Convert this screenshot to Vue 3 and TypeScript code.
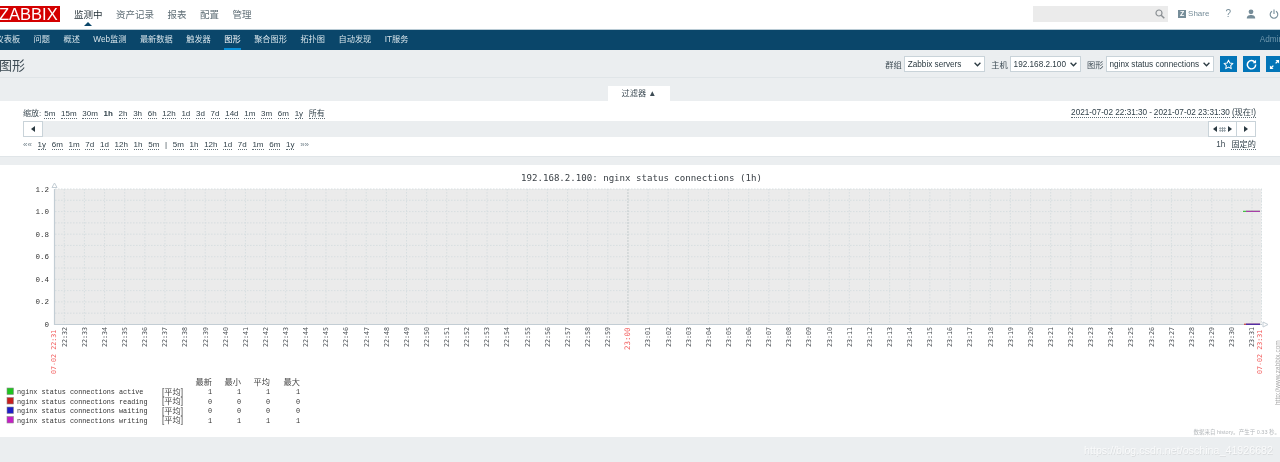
<template>
  <div class="page">
    <header class="top">
      <div class="logo">ZABBIX</div>
      <nav class="main-nav">
        <a v-for="m in mainMenu" :key="m" :class="{ active: m === '监测中' }">{{ m }}</a>
      </nav>
      <div class="top-right">
        <div class="search">
          <svg width="10" height="10" viewBox="0 0 10 10"><circle cx="4" cy="4" r="3" fill="none" stroke="#8a8f93" stroke-width="1.2" /><path d="M6.2 6.2 9.3 9.3" stroke="#8a8f93" stroke-width="1.5" /></svg>
        </div>
        <span class="share"><i class="z">Z</i>Share</span>
        <span class="help">?</span>
        <svg class="user" width="10" height="10" viewBox="0 0 10 10"><circle cx="5" cy="2.8" r="2.4" fill="#768d99" /><path d="M0.8 9.5C.8 6.6 3 6 5 6s4.200.6 4.200 3.500z" fill="#768d99" /></svg>
        <svg class="power" width="10" height="10" viewBox="0 0 10 10"><path d="M3 2.200a3.800 3.800 0 1 0 4 0M5 .5v4.500" fill="none" stroke="#768d99" stroke-width="1.100" /></svg>
      </div>
    </header>

    <nav class="sub-nav">
      <a v-for="s in subMenu" :key="s" :class="{ active: s === '图形' }">{{ s }}</a>
      <span class="admin">Admin</span>
    </nav>

    <div class="title-bar">
      <h1>图形</h1>
      <form class="controls">
        <label>群组</label>
        <div class="select w-group">Zabbix servers<svg width="7" height="5" viewBox="0 0 7 5"><path d="M.6.8 3.500 3.800 6.400.8" fill="none" stroke="#2b3a42" stroke-width="1.300" /></svg></div>
        <label>主机</label>
        <div class="select w-host">192.168.2.100<svg width="7" height="5" viewBox="0 0 7 5"><path d="M.6.8 3.500 3.800 6.400.8" fill="none" stroke="#2b3a42" stroke-width="1.300" /></svg></div>
        <label>图形</label>
        <div class="select w-graph">nginx status connections<svg width="7" height="5" viewBox="0 0 7 5"><path d="M.6.8 3.500 3.800 6.400.8" fill="none" stroke="#2b3a42" stroke-width="1.300" /></svg></div>
        <button type="button" class="icon-btn">
          <svg width="11" height="11" viewBox="0 0 24 24"><path d="m12 2.500 2.900 6.300 6.800.8-5 4.700 1.300 6.800-6-3.400-6 3.400 1.300-6.800-5-4.700 6.800-.8z" fill="none" stroke="#fff" stroke-width="2.200" stroke-linejoin="round" /></svg>
        </button>
        <button type="button" class="icon-btn">
          <svg width="11" height="11" viewBox="0 0 24 24"><path d="M19.500 7.500A9 9 0 1 0 21 12" fill="none" stroke="#fff" stroke-width="3.200" /><path d="M14.500 9H22V1.500z" fill="#fff" /></svg>
        </button>
        <button type="button" class="icon-btn">
          <svg width="11" height="11" viewBox="0 0 24 24"><path d="M14 2h8v8l-3-3-3.500 3.500-2-2L17 5zM10 22H2v-8l3 3 3.500-3.500 2 2L7 19z" fill="#fff" /></svg>
        </button>
      </form>
    </div>

    <div class="filter-head">
      <div class="filter-tab">过滤器 ▲</div>
    </div>

    <section class="filter">
      <div class="row first">
        <div class="links">
          <span class="zoom-label">缩放:</span>
          <a v-for="z in zooms" :key="z" :class="{ current: z === '1h' }">{{ z }}</a>
        </div>
        <div class="range"><a>2021-07-02 22:31:30</a> - <a>2021-07-02 23:31:30</a> <a>(现在!)</a></div>
      </div>
      <div class="scrollbar">
        <button type="button" class="nav-btn wide-left"><i class="tri left"></i></button>
        <div class="scroll-right">
          <button type="button" class="nav-btn handle"><i class="tri left"></i><i class="dots"></i><i class="tri right"></i></button>
          <button type="button" class="nav-btn wide-left"><i class="tri right"></i></button>
        </div>
      </div>
      <div class="row">
        <div class="links">
          <span class="arrows">««</span>
          <a v-for="(b, i) in back" :key="'b' + i">{{ b }}</a>
          <span>|</span>
          <a v-for="(f, i) in forward" :key="'f' + i">{{ f }}</a>
          <span class="arrows">»»</span>
        </div>
        <div class="range"><span class="period">1h</span><a>固定的</a></div>
      </div>
    </section>

    <main class="graph">
      <svg width="1280" height="272" viewBox="0 165 1280 272">
        <text x="641.500" y="180.500" class="g-title" text-anchor="middle">192.168.2.100: nginx status connections (1h)</text>

        <rect x="54.500" y="189" width="1207" height="135.500" fill="#ebebeb" />
        <line v-for="y in hLines" :key="'h' + y" x1="55" :x2="1262" :y1="y" :y2="y" class="grid" />
        <line v-for="t in ticks" :key="'v' + t.label" :x1="t.x" :x2="t.x" y1="189" y2="324.500" class="grid" :class="{ noon: t.red }" />
        <line x1="1261.500" x2="1261.500" y1="189" y2="324.500" class="grid" />

        <path d="M54.500 189V324.500H1262" fill="none" stroke="#c3cdd4" stroke-width="1.200" />
        <path d="M52 187.500 54.500 183 57 187.500z" fill="none" stroke="#c3cdd4" />
        <path d="M1263 322 1268 324.500 1263 327z" fill="none" stroke="#c3cdd4" />

        <line x1="1243" x2="1260" y1="211.300" y2="211.300" stroke="#1fb81f" />
        <line x1="1246" x2="1260" y1="211.300" y2="211.300" stroke="#c01fc0" />
        <line x1="1244" x2="1260" y1="324.200" y2="324.200" stroke="#c81e1e" />
        <line x1="1246" x2="1260" y1="324.200" y2="324.200" stroke="#1e1ec8" />

        <text v-for="l in yLabels" :key="l.text" :x="49" :y="l.y + 2.500" class="y-label" text-anchor="end">{{ l.text }}</text>

        <text v-for="t in ticks" :key="t.label" :transform="`translate(${t.x + 2.300} ${t.red ? 350 : 347}) rotate(-90)`" class="x-label" :class="{ red: t.red, big: t.red }">{{ t.label }}</text>
        <text transform="translate(56.300 374) rotate(-90)" class="x-label red">07-02 22:31</text>
        <text transform="translate(1262.300 374) rotate(-90)" class="x-label red">07-02 23:31</text>
        <text transform="translate(1280 405) rotate(-90)" class="credit">http://www.zabbix.com</text>

        <g v-for="h in stats" :key="h.text">
          <text :x="h.x" y="385" class="l-head" text-anchor="end">{{ h.text }}</text>
        </g>
        <g v-for="(row, i) in legend" :key="row.name">
          <rect x="7" :y="388 + i * 9.500" width="6.500" height="6.500" :fill="row.color" stroke="#8a8a8a" stroke-width=".6" />
          <text x="17" :y="394 + i * 9.500" class="l-name">{{ row.name }}</text>
          <text x="162" :y="394.500 + i * 9.500" class="l-avg">[平均]</text>
          <text v-for="(v, j) in row.values" :key="j" :x="stats[j].x" :y="394 + i * 9.500" class="l-val" text-anchor="end">{{ v }}</text>
        </g>
        <text x="1280" y="434" class="generated" text-anchor="end">数据来自 history。产生于 0.33 秒。</text>
      </svg>
    </main>

    <footer class="foot">
      <span class="mark">https://blog.csdn.net/oschina_41926682</span>
    </footer>
  </div>
</template>

<script setup lang="ts">
const mainMenu = ['监测中', '资产记录', '报表', '配置', '管理'];
const subMenu = ['仪表板', '问题', '概述', 'Web监测', '最新数据', '触发器', '图形', '聚合图形', '拓扑图', '自动发现', 'IT服务'];
const zooms = ['5m', '15m', '30m', '1h', '2h', '3h', '6h', '12h', '1d', '3d', '7d', '14d', '1m', '3m', '6m', '1y', '所有'];
const back = ['1y', '6m', '1m', '7d', '1d', '12h', '1h', '5m'];
const forward = ['5m', '1h', '12h', '1d', '7d', '1m', '6m', '1y'];

// 60 分钟刻度, 22:32 -> 23:31
const ticks = Array.from({ length: 60 }, (_, i) => {
  const total = 22 * 60 + 32 + i;
  const mm = String(total % 60).padStart(2, '0');
  return {
    x: 64.3 + i * 20.13,
    label: `${Math.floor(total / 60)}:${mm}`,
    red: total === 23 * 60,
  };
});

const hLines = Array.from({ length: 12 }, (_, i) => 189 + i * 11.29);
const yLabels = ['1.2', '1.0', '0.8', '0.6', '0.4', '0.2', '0'].map((text, i) => ({
  text,
  y: 189 + i * 22.58,
}));

const stats = [
  { text: '最新', x: 212 },
  { text: '最小', x: 241 },
  { text: '平均', x: 270 },
  { text: '最大', x: 300 },
];

const legend = [
  { name: 'nginx status connections active', color: '#1fc41f', values: [1, 1, 1, 1] },
  { name: 'nginx status connections reading', color: '#c81e1e', values: [0, 0, 0, 0] },
  { name: 'nginx status connections waiting', color: '#1e1ec8', values: [0, 0, 0, 0] },
  { name: 'nginx status connections writing', color: '#c41fc4', values: [1, 1, 1, 1] },
];
</script>

<style>
body {
  margin: 0;
  background: #ebeef0;
  overflow: hidden;
}
</style>

<style scoped>
.page {
  width: 1280px;
  height: 462px;
  overflow: hidden;
  position: relative;
  font-family: Arial, "Liberation Sans", "Noto Sans CJK SC", sans-serif;
  color: #1f2c33;
  font-size: 8.200px;
  filter: blur(.3px);
}

.top {
  height: 29px;
  background: #fff;
  display: flex;
  align-items: center;
  border-bottom: 1px solid #b8cad4;
  position: relative;
}
.logo {
  width: 60px;
  height: 16px;
  margin-top: -2px;
  background: #d40000;
  color: #fff;
  font-size: 16.500px;
  line-height: 17px;
  text-indent: -1px;
  overflow: hidden;
  white-space: nowrap;
}
.main-nav {
  display: flex;
  gap: 13.500px;
  margin-left: 14px;
  margin-top: -2px;
  font-size: 9.500px;
}
.main-nav a {
  color: #5f6e76;
}
.main-nav .active {
  color: #1f2c33;
  position: relative;
}
.main-nav .active::after {
  content: "";
  position: absolute;
  left: 50%;
  top: 15px;
  margin-left: -4px;
  border: 4px solid transparent;
  border-top: 0;
  border-bottom-color: #0a466a;
}
.top-right {
  margin-left: auto;
  display: flex;
  align-items: center;
  margin-top: -2px;
}
.search {
  width: 135px;
  height: 16px;
  background: #ebebeb;
  display: flex;
  align-items: center;
  justify-content: flex-end;
  padding-right: 3px;
  box-sizing: border-box;
}
.share {
  margin-left: 10px;
  width: 31px;
  display: flex;
  align-items: center;
  gap: 2px;
  color: #768d99;
  font-size: 8px;
}
.z {
  width: 8px;
  height: 8px;
  background: #768d99;
  color: #fff;
  font-size: 7px;
  line-height: 8px;
  text-align: center;
  font-style: normal;
  font-weight: 700;
}
.help {
  margin-left: 16px;
  color: #768d99;
  font-size: 10px;
}
.user {
  margin-left: 15px;
}
.power {
  margin-left: 13px;
  margin-right: 1px;
}

.sub-nav {
  height: 20px;
  background: #0a466a;
  display: flex;
  gap: 13.500px;
  font-size: 8.200px;
  line-height: 20px;
  white-space: nowrap;
}
.sub-nav a {
  color: #d7e4ea;
}
.sub-nav a:first-child {
  margin-left: -4.500px;
}
.sub-nav .active {
  color: #fff;
  box-shadow: inset 0 -2px 0 #0a8fd6;
}
.admin {
  margin-left: auto;
  margin-right: -3px;
  color: #6f97ad;
}

.title-bar {
  height: 28px;
  box-sizing: border-box;
  padding-top: 1px;
  border-bottom: 1px solid #e0e5e8;
  display: flex;
  align-items: center;
  justify-content: space-between;
}
h1 {
  margin: 0 0 0 -1px;
  font-size: 13px;
  font-weight: 400;
  color: #3d4b54;
}
.controls {
  display: flex;
  align-items: center;
  margin-right: -9px;
}
.controls label {
  margin-right: 2px;
  color: #3d4b54;
}
.select {
  height: 16px;
  box-sizing: border-box;
  background: #fff;
  border: 1px solid #c9d3d9;
  display: flex;
  align-items: center;
  justify-content: space-between;
  padding: 0 3px;
  margin-right: 6.500px;
  font-size: 8.200px;
  color: #2b3a42;
  white-space: nowrap;
}
.w-group { width: 81px; }
.w-host { width: 71px; }
.w-graph { width: 108px; }
.icon-btn {
  width: 17px;
  height: 16px;
  padding: 0;
  margin-right: 6px;
  border: 0;
  background: #0275b8;
  display: flex;
  align-items: center;
  justify-content: center;
}

.filter-head {
  height: 23px;
  display: flex;
  justify-content: center;
  align-items: flex-end;
}
.filter-tab {
  width: 62px;
  height: 15px;
  background: #fff;
  margin-left: -2px;
  text-align: center;
  line-height: 16px;
  font-size: 8.200px;
  color: #3d4b54;
}

.filter {
  height: 56px;
  background: #fff;
  box-sizing: border-box;
  padding: 4px 24px 0 23px;
  border-bottom: 1px solid #e0e5e8;
}
.row {
  height: 15px;
  display: flex;
  align-items: center;
  justify-content: space-between;
  white-space: nowrap;
}
.row.first {
  margin-bottom: 1px;
}
.links {
  display: flex;
  align-items: baseline;
  gap: 5.700px;
  font-size: 8px;
  color: #3d4b54;
}
.zoom-label {
  margin-right: -2.700px;
}
a {
  color: #2f3f48;
}
.filter a {
  border-bottom: 1px dotted #5e6c74;
  line-height: 9px;
}
.current {
  font-weight: 700;
  border-bottom: 0 !important;
}
.arrows {
  color: #6f7f88;
}
.range {
  display: flex;
  gap: 2px;
  color: #3d4b54;
}
.period {
  margin-right: 4px;
}
.scrollbar {
  height: 16px;
  background: #ebeef0;
  display: flex;
  justify-content: space-between;
}
.scroll-right {
  display: flex;
}
.nav-btn {
  height: 16px;
  padding: 0;
  box-sizing: border-box;
  border: 1px solid #c9d3d9;
  background: #fff;
  display: flex;
  align-items: center;
  justify-content: center;
}
.wide-left {
  width: 20px;
}
.handle {
  width: 28px;
  gap: 2px;
  border-right: 0;
}
.tri {
  width: 0;
  height: 0;
  border: 3px solid transparent;
}
.tri.left {
  border-left: 0;
  border-right: 4px solid #2b3a42;
}
.tri.right {
  border-right: 0;
  border-left: 4px solid #2b3a42;
}
.dots {
  width: 7px;
  height: 5px;
  background-image: radial-gradient(#8f9ba2 .8px, transparent .9px);
  background-size: 2.300px 2.500px;
}

.graph {
  margin-top: 8px;
  height: 272px;
  background: #fff;
  line-height: 0;
}
.g-title {
  font: 9.100px "DejaVu Sans Mono", monospace;
  fill: #3a4046;
}
.grid {
  stroke: #d5dcdf;
  stroke-width: .9;
  stroke-dasharray: 1.500 1.500;
}
.grid.noon {
  stroke: #c0c7ca;
  stroke-dasharray: 2 1;
}
.y-label {
  font: 7.500px "Liberation Mono", monospace;
  fill: #333;
}
.x-label {
  font: 6.700px "DejaVu Sans Mono", monospace;
  fill: #4a4f54;
}
.x-label.red {
  fill: #f25a5a;
}
.x-label.big {
  font-size: 7.500px;
}
.credit {
  font: 6.500px "Liberation Sans", sans-serif;
  fill: #a8a8a8;
}
.l-head {
  font: 8.200px "Liberation Sans", "Noto Sans CJK SC", sans-serif;
  fill: #444;
}
.l-name {
  font: 6.800px "Liberation Mono", monospace;
  fill: #333;
}
.l-avg {
  font: 8.200px "Liberation Sans", "Noto Sans CJK SC", sans-serif;
  fill: #444;
}
.l-val {
  font: 6.800px "Liberation Mono", monospace;
  fill: #333;
}
.generated {
  font: 5.500px "Liberation Sans", "Noto Sans CJK SC", sans-serif;
  fill: #b4b8bb;
}

.foot {
  height: 25px;
}
.mark {
  position: absolute;
  right: 7px;
  bottom: 6px;
  font-size: 10.700px;
  color: #fff;
  opacity: .7;
  text-shadow: .5px .5px .5px rgba(0, 0, 0, .12);
}
</style>
